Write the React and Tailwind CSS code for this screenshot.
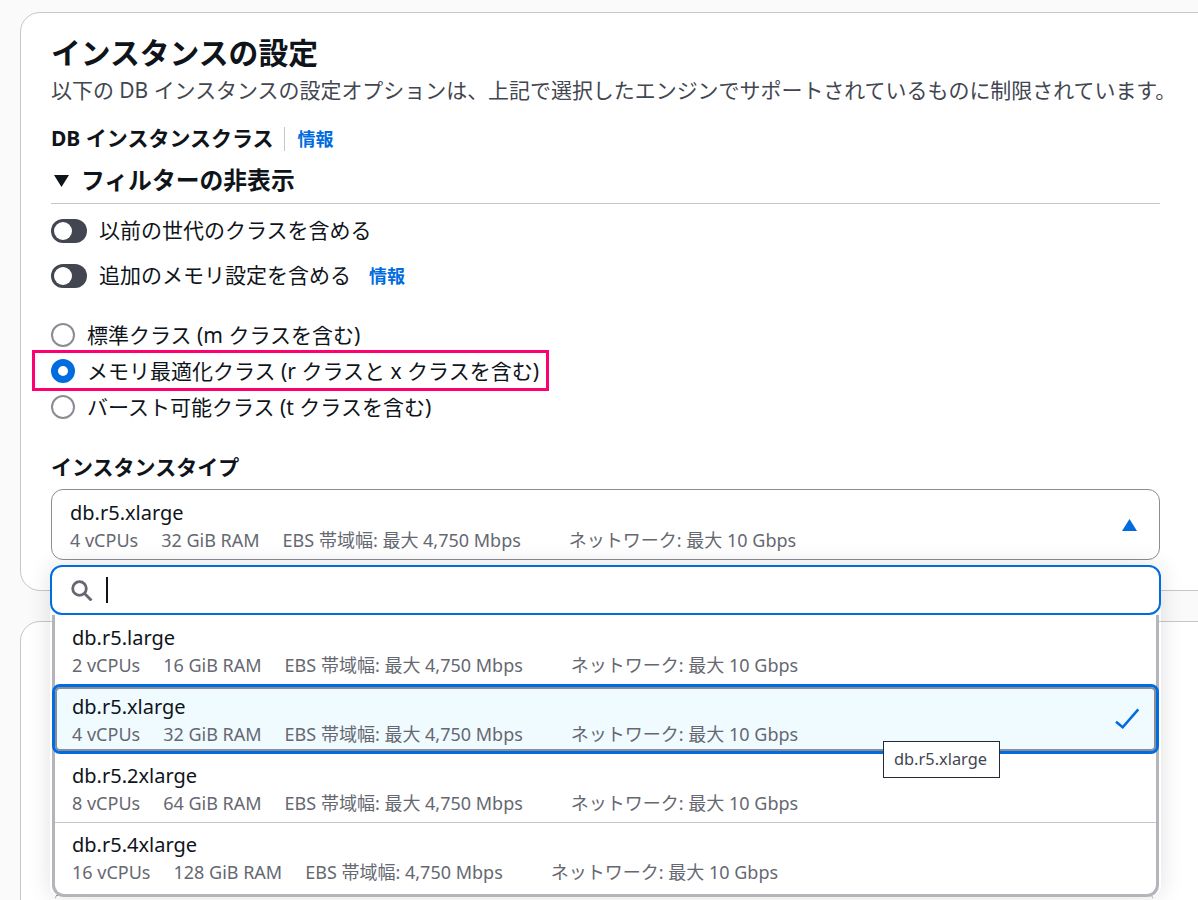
const font = "font-['Noto_Sans','Noto_Sans_CJK_JP',sans-serif]";

const options = [
  { name: "db.r5.large", cpu: "2 vCPUs", ram: "16 GiB RAM", ebs: "EBS 帯域幅: 最大 4,750 Mbps", cls: "h-[69px] pl-[17px] pt-[9px]" },
  {
    name: "db.r5.xlarge",
    cpu: "4 vCPUs",
    ram: "32 GiB RAM",
    ebs: "EBS 帯域幅: 最大 4,750 Mbps",
    selected: true,
    cls: "relative -mx-[3px] h-[70px] rounded-lg border-[3px] border-[#006ce0] bg-[#f0fbff] pl-[17px] pt-[6px] shadow-[inset_0_0_0_2px_#8c8c94]",
  },
  { name: "db.r5.2xlarge", cpu: "8 vCPUs", ram: "64 GiB RAM", ebs: "EBS 帯域幅: 最大 4,750 Mbps", cls: "h-[68px] pl-[17px] pt-[8px]" },
  { name: "db.r5.4xlarge", cpu: "16 vCPUs", ram: "128 GiB RAM", ebs: "EBS 帯域幅: 4,750 Mbps", cls: "h-[72px] border-t border-[#c6c6cd] pl-[17px] pt-[8px]" },
];

function Specs({ item }) {
  return (
    <div className="flex text-[18px] leading-[26px] text-[#656871] whitespace-nowrap">
      <span className="mr-[23px]">{item.cpu}</span>
      <span className="mr-[23px]">{item.ram}</span>
      <span className="mr-[48px]">{item.ebs}</span>
      <span>ネットワーク: 最大 10 Gbps</span>
    </div>
  );
}

function Toggle() {
  return (
    <span className="flex h-6 w-9 shrink-0 items-center rounded-full bg-[#424650] pl-[3px]">
      <span className="h-[18px] w-[18px] rounded-full bg-white" />
    </span>
  );
}

function Radio({ checked, label }) {
  return (
    <div className="flex h-9 items-center gap-3 text-[21px] text-[#0f141a] whitespace-nowrap">
      {checked ? (
        <span className="h-6 w-6 rounded-full border-[7px] border-[#006ce0] bg-white" />
      ) : (
        <span className="h-6 w-6 rounded-full border-2 border-[#8c8c94] bg-white" />
      )}
      <span className="pt-px">{label}</span>
    </div>
  );
}

export default function App() {
  return (
    <div className={`relative h-[900px] w-[1198px] overflow-hidden bg-[#fafafa] pl-5 pt-3 ${font}`}>
      <div className="h-[579px] w-[1240px] rounded-l-[20px] border border-[#c6c6cd] bg-white pl-[30px] pt-[18px]">
        <h1 className="text-[29.8px] leading-[44px] font-bold text-[#0f141a]">インスタンスの設定</h1>
        <p className="text-[20.96px] leading-[30px] text-[#424650] whitespace-nowrap">
          以下の DB インスタンスの設定オプションは、上記で選択したエンジンでサポートされているものに制限されています。
        </p>

        <div className="mt-[22px] flex h-6 items-center">
          <span className="text-[21px] font-bold text-[#0f141a]">DB インスタンスクラス</span>
          <span className="ml-[10px] mr-[13px] h-6 w-px bg-[#c6c6cd]" />
          <a className="text-[18px] font-bold text-[#006ce0]">情報</a>
        </div>

        <div className="mt-[11px] flex h-[42px] w-[1109px] items-center border-b border-[#c6c6cd] pb-[3px]">
          <svg width="15" height="12" viewBox="0 0 15 12" className="ml-[3px] mr-3">
            <path d="M0 0h15L7.5 12z" fill="#0f141a" />
          </svg>
          <span className="text-[23.8px] font-bold text-[#0f141a]">フィルターの非表示</span>
        </div>

        <div className="mt-[15px] flex h-6 items-center gap-3 text-[21px] text-[#0f141a]">
          <Toggle />
          <span>以前の世代のクラスを含める</span>
        </div>
        <div className="mt-[21px] flex h-6 items-center gap-3 text-[21px] text-[#0f141a]">
          <Toggle />
          <span>追加のメモリ設定を含める</span>
          <a className="ml-[6px] text-[18px] font-bold text-[#006ce0]">情報</a>
        </div>

        <div className="mt-[29px]">
          <Radio label="標準クラス (m クラスを含む)" />
          <Radio checked label="メモリ最適化クラス (r クラスと x クラスを含む)" />
          <Radio label="バースト可能クラス (t クラスを含む)" />
        </div>

        <div className="mt-[29px] text-[21px] leading-[26px] font-bold text-[#0f141a]">インスタンスタイプ</div>

        <div className="mt-[9px] flex h-[71px] w-[1109px] items-center justify-between rounded-xl border border-[#8c8c94] bg-white pl-[18px] pr-[22px]">
          <div className="pt-[2px]">
            <div className="text-[20px] leading-[28px] text-[#0f141a]">db.r5.xlarge</div>
            <Specs item={options[1]} />
          </div>
          <svg width="15" height="12" viewBox="0 0 15 12">
            <path d="M7.5 0L15 12H0z" fill="#006ce0" />
          </svg>
        </div>
      </div>

      <div className="mt-[30px] h-[300px] w-[1240px] rounded-l-[20px] border border-[#c6c6cd] bg-white" />

      {/* field just under the open list, only its corners show */}
      <div className="absolute left-[55px] top-[894px] h-[5px] w-[1098px] rounded-t-lg border-t border-[#424650] bg-white" />

      {/* dropdown */}
      <div className="absolute left-[50px] top-[565px] w-[1111px] rounded-xl shadow-[0_0_24px_rgba(0,7,22,0.12)]">
        <div className="relative z-10 flex h-[50px] items-center rounded-xl border-2 border-[#006ce0] bg-white pl-[19px]">
          <svg width="22" height="21" viewBox="0 0 22 21" fill="none" stroke="#656871" strokeWidth="2.8">
            <circle cx="8.5" cy="8.5" r="6.8" />
            <path d="M13.5 13.5l7 7" />
          </svg>
          <span className="ml-[13px] h-[26px] w-[2px] bg-[#0f141a]" />
        </div>
        <div className="mx-[2px] h-[282px] rounded-b-xl border-[3px] border-t-0 border-[#b4b4bb] bg-white">
          {options.map((o) => (
            <div key={o.name} className={o.cls}>
              <div className="text-[20px] leading-[28px] text-[#0f141a]">{o.name}</div>
              <Specs item={o} />
              {o.selected && (
                <svg width="26" height="22" viewBox="0 0 26 22" fill="none" stroke="#006ce0" strokeWidth="2.6" className="absolute right-[15px] top-[21px]">
                  <path d="M1 13.7l6.7 5.6L23.3 1.3" />
                </svg>
              )}
            </div>
          ))}
        </div>
      </div>

      {/* highlight around the selected radio */}
      <div className="absolute left-[32px] top-[350px] h-[41px] w-[517px] border-[3px] border-[#ff0073]" />

      {/* tooltip */}
      <div className="absolute left-[883px] top-[741px] flex h-[37px] w-[117px] items-center justify-center border border-[#232b37] bg-white pr-[2px] text-[16.4px] text-[#424650]">
        db.r5.xlarge
      </div>
    </div>
  );
}
